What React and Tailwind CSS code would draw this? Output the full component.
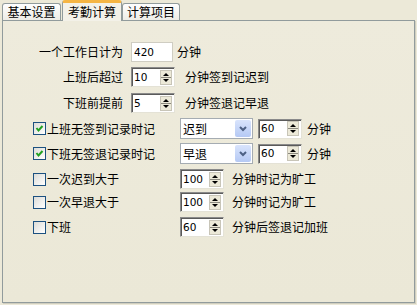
import React from "react";

const Spin = ({ value, w = "w-[44px]" }) => (
  <div className={`${w} h-[20px] bg-white border border-t-[#8A8A8A] border-l-[#8A8A8A] border-r-[#E4E2D6] border-b-[#E4E2D6] shadow-[inset_1px_1px_0_#5A5A5A] flex items-center justify-between pl-[2px] pr-[2px]`}>
    <span className="font-['DejaVu_Sans',sans-serif] text-[10.5px] leading-none text-black">{value}</span>
    <svg width="12" height="15" viewBox="0 0 12 15" className="shrink-0">
      <rect x="0.5" y="0.5" width="11" height="14" fill="#ECE9D8" stroke="#C8C5B8" />
      <line x1="1" y1="7.5" x2="11" y2="7.5" stroke="#8C8A80" />
      <polygon points="3,6 9,6 6,3" fill="#000" />
      <polygon points="3,9 9,9 6,12" fill="#000" />
    </svg>
  </div>
);

const Combo = ({ value }) => (
  <div className="w-[73px] h-[21px] bg-white border border-[#A5ACB2] flex items-center justify-between pl-[2px] pr-[1px]">
    <span className="text-[12px] leading-none">{value}</span>
    <div className="w-[16px] h-[17px] rounded-[2px] bg-gradient-to-b from-[#D9E4FC] to-[#B5C9F4] flex items-center justify-center">
      <svg width="8" height="6" viewBox="0 0 8 6">
        <polyline points="1,1 4,4 7,1" fill="none" stroke="#4D6185" strokeWidth="2" />
      </svg>
    </div>
  </div>
);

const Check = ({ checked }) => (
  <div className="w-[13px] h-[13px] border border-[#1C5180] bg-gradient-to-br from-[#DCDCD7] to-[#FFFFFF] flex items-center justify-center shrink-0">
    {checked && (
      <svg width="9" height="9" viewBox="0 0 9 9">
        <polyline points="1.5,4 3.5,6.5 7.5,2" fill="none" stroke="#21A121" strokeWidth="2" />
      </svg>
    )}
  </div>
);

const Tab = ({ label, selected }) => (
  <div
    className={
      selected
        ? "h-[21px] flex items-center justify-center whitespace-nowrap rounded-t-[3px] border border-b-0 border-[#919B9C] border-t-[3px] border-t-[#F5B544] bg-[#F3F1E8] -mb-[1px] relative z-10"
        : "h-[17px] flex items-center justify-center whitespace-nowrap rounded-t-[3px] border border-b-0 border-[#919B9C] bg-gradient-to-b from-[#FEFEFE] to-[#EDECE6]"
    }
  >
    <span className="text-[12px] leading-none">{label}</span>
  </div>
);

export default function App() {
  return (
    <div className="w-[417px] h-[305px] bg-[#ECE9D8] font-['Noto_Sans_CJK_SC',sans-serif] text-[12px] text-black overflow-hidden">
      <div className="h-[20px] flex items-end pl-[2px]">
        <div className="w-[59px]"><Tab label="基本设置" /></div>
        <div className="w-[60px] ml-[1px]"><Tab label="考勤计算" selected /></div>
        <div className="w-[58px]"><Tab label="计算项目" /></div>
      </div>
      <div className="ml-[2px] w-[413px] h-[283px] border border-[#919B9C] shadow-[1px_1px_0_#D0CEBF] bg-gradient-to-b from-[#EEEBDC] to-[#EBE8D7]">
        <div className="mt-[21px] flex items-center h-[20px]">
          <div className="w-[120px] text-right">一个工作日计为</div>
          <div className="ml-[8px] w-[42px] h-[20px] bg-white border border-[#CFCDC2] flex items-center pl-[2px]">
            <span className="font-['DejaVu_Sans',sans-serif] text-[10.5px] leading-none">420</span>
          </div>
          <div className="ml-[4px]">分钟</div>
        </div>
        <div className="mt-[5px] flex items-center h-[20px]">
          <div className="w-[120px] text-right">上班后超过</div>
          <div className="ml-[8px]"><Spin value="10" /></div>
          <div className="ml-[10px]">分钟签到记迟到</div>
        </div>
        <div className="mt-[6px] flex items-center h-[20px]">
          <div className="w-[120px] text-right">下班前提前</div>
          <div className="ml-[8px]"><Spin value="5" /></div>
          <div className="ml-[10px]">分钟签退记早退</div>
        </div>

        <div className="mt-[5px] flex items-center h-[21px] pl-[30px]">
          <Check checked />
          <div className="w-[133px] ml-[1px]">上班无签到记录时记</div>
          <Combo value="迟到" />
          <div className="ml-[5px]"><Spin value="60" /></div>
          <div className="ml-[5px]">分钟</div>
        </div>
        <div className="mt-[4px] flex items-center h-[21px] pl-[30px]">
          <Check checked />
          <div className="w-[133px] ml-[1px]">下班无签退记录时记</div>
          <Combo value="早退" />
          <div className="ml-[5px]"><Spin value="60" /></div>
          <div className="ml-[5px]">分钟</div>
        </div>

        <div className="mt-[5px] flex items-center h-[20px] pl-[30px]">
          <Check />
          <div className="w-[133px] ml-[1px]">一次迟到大于</div>
          <Spin value="100" />
          <div className="ml-[8px]">分钟时记为旷工</div>
        </div>
        <div className="mt-[3px] flex items-center h-[20px] pl-[30px]">
          <Check />
          <div className="w-[133px] ml-[1px]">一次早退大于</div>
          <Spin value="100" />
          <div className="ml-[8px]">分钟时记为旷工</div>
        </div>
        <div className="mt-[5px] flex items-center h-[20px] pl-[30px]">
          <Check />
          <div className="w-[133px] ml-[1px]">下班</div>
          <Spin value="60" />
          <div className="ml-[8px]">分钟后签退记加班</div>
        </div>
      </div>
    </div>
  );
}
